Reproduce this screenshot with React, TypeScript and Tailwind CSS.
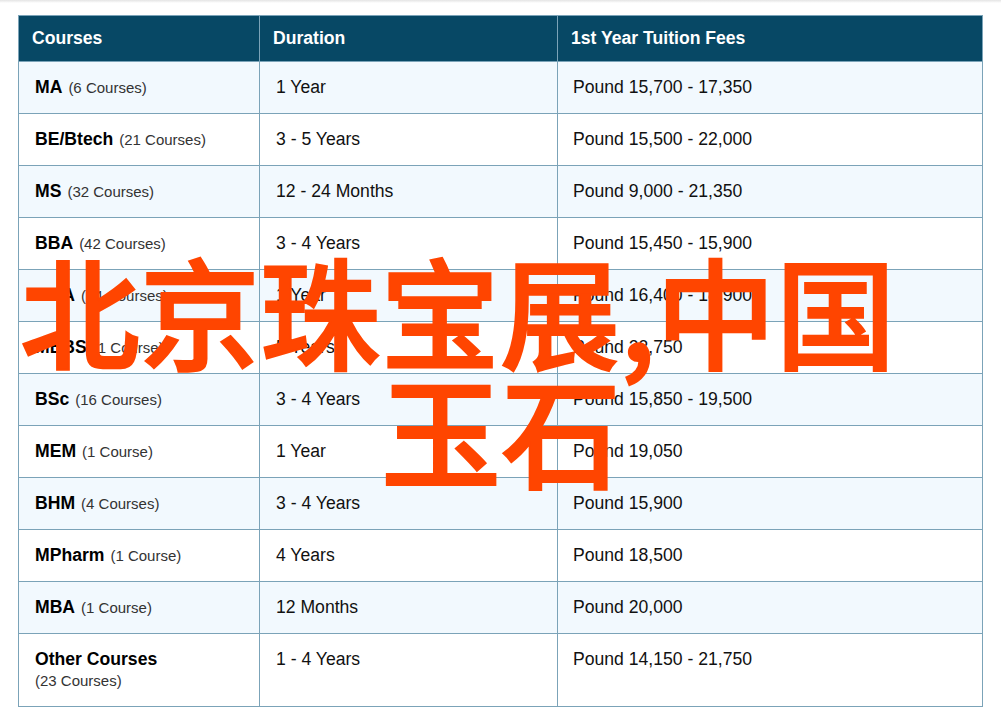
const rows: [string, string, string, string][] = [
  ["MA", "(6 Courses)", "1 Year", "Pound 15,700 - 17,350"],
  ["BE/Btech", "(21 Courses)", "3 - 5 Years", "Pound 15,500 - 22,000"],
  ["MS", "(32 Courses)", "12 - 24 Months", "Pound 9,000 - 21,350"],
  ["BBA", "(42 Courses)", "3 - 4 Years", "Pound 15,450 - 15,900"],
  ["MBA", "(24 Courses)", "1 Year", "Pound 16,400 - 18,900"],
  ["MBBS", "(1 Course)", "5 Years", "Pound 23,750"],
  ["BSc", "(16 Courses)", "3 - 4 Years", "Pound 15,850 - 19,500"],
  ["MEM", "(1 Course)", "1 Year", "Pound 19,050"],
  ["BHM", "(4 Courses)", "3 - 4 Years", "Pound 15,900"],
  ["MPharm", "(1 Course)", "4 Years", "Pound 18,500"],
  ["MBA", "(1 Course)", "12 Months", "Pound 20,000"],
];

export default function App() {
  return (
    <div className="relative h-[720px] w-[1001px] overflow-hidden bg-white pl-[18px] pt-[15px] font-['Liberation_Sans',Arial,sans-serif]">
      {/* page header shadow */}
      <div className="absolute left-0 right-0 top-0 h-[3px] bg-gradient-to-b from-[#e4e4e4] to-white" />

      <table className="w-[965px] table-fixed border-collapse">
        <colgroup>
          <col className="w-[241px]" />
          <col className="w-[298px]" />
          <col />
        </colgroup>
        <thead>
          <tr className="h-[46px] bg-[#074865] text-left text-[17.6px] text-white">
            <th className="border border-[#7ba3b8] pl-[13px] font-bold">Courses</th>
            <th className="border border-[#7ba3b8] pl-[13px] font-bold">Duration</th>
            <th className="border border-[#7ba3b8] pl-[13px] font-bold">1st Year Tuition Fees</th>
          </tr>
        </thead>
        <tbody className="text-[17.6px] text-[#111]">
          {rows.map((r, i) => (
            <tr key={i} className={`h-[52px] ${i % 2 === 0 ? "bg-[#f2f9fe]" : "bg-white"}`}>
              <td className="border border-[#7ba3b8] pl-[16px]">
                <b className="text-black">{r[0]}</b>
                <span className="ml-[6px] text-[15px] text-[#333]">{r[1]}</span>
              </td>
              <td className="border border-[#7ba3b8] pl-[16px]">{r[2]}</td>
              <td className="border border-[#7ba3b8] pl-[15px]">{r[3]}</td>
            </tr>
          ))}
          <tr className="h-[73px] bg-white align-top">
            <td className="border border-[#7ba3b8] pl-[16px] pt-[15px]">
              <b className="block leading-[21px] text-black">Other Courses</b>
              <span className="block text-[15px] leading-[22px] text-[#333]">(23 Courses)</span>
            </td>
            <td className="border border-[#7ba3b8] pl-[16px] pt-[15px] leading-[21px]">1 - 4 Years</td>
            <td className="border border-[#7ba3b8] pl-[15px] pt-[15px] leading-[21px]">Pound 14,150 - 21,750</td>
          </tr>
        </tbody>
      </table>

      {/* watermark title over the table */}
      <div className="absolute left-[20px] top-[250px] whitespace-nowrap font-['Noto_Sans_CJK_SC',sans-serif] text-[120px] font-medium leading-[119px] text-[#ff4500] [-webkit-text-stroke:2px_#ff4500]">
        <div>北京珠宝展,中国</div>
        <div className="pl-[361px]">玉石</div>
      </div>
    </div>
  );
}
